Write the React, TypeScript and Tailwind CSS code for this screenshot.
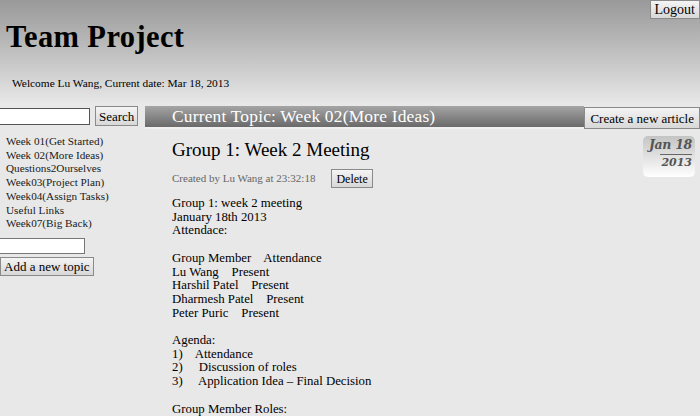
import React from 'react';

const topics = [
  'Week 01(Get Started)',
  'Week 02(More Ideas)',
  'Questions2Ourselves',
  'Week03(Project Plan)',
  'Week04(Assign Tasks)',
  'Useful Links',
  'Week07(Big Back)',
];

const btn =
  "bg-gradient-to-b from-[#f4f4f4] to-[#d8d8d8] border border-[#8a8a8a] text-black font-['Liberation_Serif',serif] leading-none";

const App: React.FC = () => {
  return (
    <div className="w-[700px] h-[416px] overflow-hidden bg-[#e8e8e8] font-['Liberation_Serif',serif] text-black">
      <header className="h-[102px] bg-gradient-to-b from-[#999999] to-[#e6e6e6] flex justify-between">
        <div className="pt-[20px] pl-[6px]">
          <h1 className="text-[30.5px] font-bold leading-[34px] tracking-[0.4px]">Team Project</h1>
          <p className="mt-[22px] pl-[6px] text-[11.4px] leading-[14px]">
            Welcome Lu Wang, Current date: Mar 18, 2013
          </p>
        </div>
        <button className={`${btn} h-[19px] px-[4px] text-[14px] self-start`}>Logout</button>
      </header>

      <div className="flex">
        <aside className="w-[145px] shrink-0 pt-[4px]">
          <div className="flex items-center gap-[5px]">
            <input className="w-[100px] h-[17px] -ml-[10px] bg-white border border-[#555] outline-none" />
            <button className={`${btn} h-[20px] px-[3px] text-[13px]`}>Search</button>
          </div>
          <ul className="mt-[9px] pl-[6px] text-[11.2px] leading-[13.7px] text-[#1a1a1a]">
            {topics.map((t) => (
              <li key={t}>{t}</li>
            ))}
          </ul>
          <input className="mt-[7px] w-[95px] h-[16px] -ml-[10px] bg-white border border-[#777] outline-none block" />
          <button className={`${btn} mt-[3px] h-[19px] px-[3px] text-[13px]`}>Add a new topic</button>
        </aside>

        <main className="flex-1">
          <div className="flex mt-[4px] items-start">
            <div className="flex-1 h-[23px] bg-gradient-to-b from-[#a5a5a5] to-[#6a6a6a] border-b-2 border-[#f0f0f0] flex items-center pl-[27px]">
              <span className="text-white text-[17.4px] leading-none tracking-[0.2px]">
                Current Topic: Week 02(More Ideas)
              </span>
            </div>
            <button className={`${btn} mt-[1px] h-[22px] px-[5px] text-[13px]`}>Create a new article</button>
          </div>

          <article className="pl-[27px] pr-[5px]">
            <div className="float-right mt-[7px] w-[52px] h-[41px] rounded-[5px] bg-gradient-to-b from-[#c4c4c4] to-[#ffffff] flex flex-col items-end pr-[3px] font-['DejaVu_Serif',serif] italic font-bold text-[#555]">
              <span className="text-[12.5px] leading-[18px] tracking-[-0.3px]">Jan 18</span>
              <span className="w-[32px] h-[1px] bg-[#666]" />
              <span className="text-[11px] leading-[16px]">2013</span>
            </div>
            <h2 className="pt-[10px] text-[19px] leading-[22px]">Group 1: Week 2 Meeting</h2>
            <div className="mt-[8px] flex items-center">
              <span className="text-[11px] text-[#666]">Created by Lu Wang at 23:32:18</span>
              <button className={`${btn} ml-[16px] h-[19px] px-[4px] text-[12px]`}>Delete</button>
            </div>
            <div className="mt-[9px] text-[12.8px] leading-[13.7px]">
              <p>Group 1: week 2 meeting</p>
              <p>January 18th 2013</p>
              <p>Attendace:</p>
              <p>&nbsp;</p>
              <p>Group Member&nbsp;&nbsp;&nbsp; Attendance</p>
              <p>Lu Wang&nbsp;&nbsp;&nbsp; Present</p>
              <p>Harshil Patel&nbsp;&nbsp;&nbsp; Present</p>
              <p>Dharmesh Patel&nbsp;&nbsp;&nbsp; Present</p>
              <p>Peter Puric&nbsp;&nbsp;&nbsp; Present</p>
              <p>&nbsp;</p>
              <p>Agenda:</p>
              <p>1)&nbsp;&nbsp;&nbsp; Attendance</p>
              <p>2)&nbsp;&nbsp;&nbsp;&nbsp; Discussion of roles</p>
              <p>3)&nbsp;&nbsp;&nbsp;&nbsp; Application Idea – Final Decision</p>
              <p>&nbsp;</p>
              <p>Group Member Roles:</p>
            </div>
          </article>
        </main>
      </div>
    </div>
  );
};

export default App;
